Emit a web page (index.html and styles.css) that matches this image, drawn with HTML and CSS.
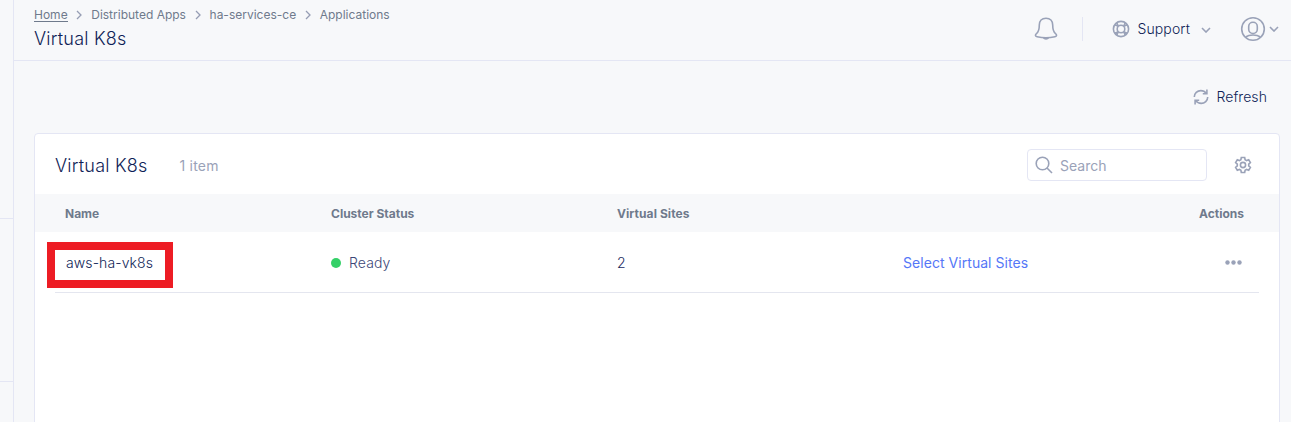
FILE: index.html
```html
<!DOCTYPE html>
<html lang="en">
<head>
<meta charset="utf-8">
<title>Virtual K8s</title>
<link rel="stylesheet" href="styles.css">
</head>
<body>
<div class="app">
  <aside class="rail"><div class="rail-a"></div><div class="rail-b"></div></aside>
  <div class="content">
    <header class="header">
      <div class="heading">
        <nav class="crumbs">
          <a class="home">Home</a>
          <svg class="sep" viewBox="0 0 6 10"><path d="M1 1l4 4-4 4"/></svg>
          <a class="c-apps">Distributed Apps</a>
          <svg class="sep" viewBox="0 0 6 10"><path d="M1 1l4 4-4 4"/></svg>
          <a class="c-ns">ha-services-ce</a>
          <svg class="sep" viewBox="0 0 6 10"><path d="M1 1l4 4-4 4"/></svg>
          <a class="c-last">Applications</a>
        </nav>
        <h1 class="title">Virtual K8s</h1>
      </div>
      <div class="tools">
        <svg class="icon bell" viewBox="0 0 24 24"><path d="M12 1.200c-4.200 0-6.700 2.800-6.700 6.800 0 4.500-.5 6.500-2.600 8.300-1.900 1.500-1.600 3.100.4 3.500 6 1.300 11.800 1.300 17.800 0 2-.4 2.300-2 .4-3.500-2.100-1.800-2.600-3.800-2.600-8.300 0-4-2.500-6.800-6.700-6.800z"/><path class="fill" d="M9 21h6c-.6 2.300-5.400 2.300-6 0z"/></svg>
        <span class="divider"></span>
        <svg class="icon ring" viewBox="0 0 18 18"><circle cx="9" cy="9" r="7.600"/><circle cx="9" cy="9" r="3.800"/><path d="M6.300 6.300L4.800 2.700M6.300 6.300L2.700 4.800M11.700 6.300l1.500-3.600M11.700 6.300l3.600-1.500M6.300 11.700l-1.500 3.600M6.300 11.700l-3.600 1.500M11.700 11.700l1.500 3.600M11.700 11.700l3.600 1.500"/></svg>
        <span class="support">Support</span>
        <svg class="icon chev chev-a" viewBox="0 0 10 6"><path d="M1 1l4 4 4-4"/></svg>
        <svg class="icon user" viewBox="0 0 26 26"><circle cx="13" cy="13" r="11.300"/><rect x="8.700" y="6.300" width="8.600" height="11.200" rx="4.200"/><path d="M5.500 21c4-2.600 11-2.600 15 0"/></svg>
        <svg class="icon chev chev-b" viewBox="0 0 10 6"><path d="M1 1l4 4 4-4"/></svg>
      </div>
    </header>
    <div class="actions">
      <svg class="icon refresh" viewBox="0 0 16 16"><path d="M1.300 8c0-3.700 3-6.400 6.500-6.400 2.200 0 4.200 1 5.400 2.800M13.900 .6v4.200H9.800M14.700 8c0 3.700-3 6.400-6.500 6.400-2.200 0-4.200-1-5.400-2.800M2.100 15.400v-4.200h4.100"/></svg>
      <span class="refresh-text">Refresh</span>
    </div>
    <main class="card">
      <div class="card-head">
        <h2 class="card-title">Virtual K8s</h2>
        <span class="count">1 item</span>
        <div class="search">
          <svg class="icon glass" viewBox="0 0 18 18"><circle cx="7.500" cy="7.500" r="6.300"/><path d="M12 12l5 5"/></svg>
          <span class="placeholder">Search</span>
        </div>
        <svg class="icon gear" viewBox="0 0 18 18"><path d="M7.300 1.500h3.400l.4 2.200 1.500.9 2.100-.8 1.700 2.900-1.700 1.500v1.600l1.700 1.500-1.700 2.900-2.100-.8-1.500.9-.4 2.200H7.300l-.4-2.200-1.500-.9-2.100.8-1.700-2.900 1.700-1.500V8.200L1.600 6.700l1.700-2.900 2.100.8 1.500-.9z"/><circle cx="9" cy="9" r="2.600"/></svg>
      </div>
      <div class="row row-head">
        <span class="th-name">Name</span><span class="th-status">Cluster Status</span><span class="th-sites">Virtual Sites</span><span></span><span class="th-actions">Actions</span>
      </div>
      <div class="row row-item">
        <span class="name">aws-ha-vk8s<i class="highlight"></i></span>
        <span class="status"><i class="dot"></i><b class="ready">Ready</b></span>
        <span class="num">2</span>
        <a class="link">Select Virtual Sites</a>
        <svg class="more" viewBox="0 0 17 5"><circle cx="2.500" cy="2.500" r="2.200"/><circle cx="8.500" cy="2.500" r="2.200"/><circle cx="14.500" cy="2.500" r="2.200"/></svg>
      </div>
    </main>
  </div>
</div>
</body>
</html>
```
FILE: styles.css
```css
* { box-sizing: border-box; }
body { margin: 0; font-family: Inter, "Liberation Sans", sans-serif; color: #0f1e57; background: #f7f8fa; }
h1, h2 { margin: 0; font-weight: 400; }
.app { display: flex; height: 422px; overflow: hidden; }
.rail { width: 14px; flex: none; border-right: 1px solid #e4e6f4; }
.rail-a { height: 219px; border-bottom: 1px solid #e4e6f4; }
.rail-b { height: 163px; border-bottom: 1px solid #e4e6f4; }
.content { flex: 1; display: flex; flex-direction: column; }
.header { height: 61px; flex: none; display: flex; justify-content: space-between; border-bottom: 1px solid #e4e6f4; padding-left: 20px; }
.crumbs { display: flex; align-items: center; height: 16px; margin-top: 7px; font-size: 12px; line-height: 16px; color: #6f7a8c; white-space: nowrap; }
.home { height: 14px; line-height: 14px; border-bottom: 1px solid #6f7a8c; }
.sep { width: 6px; height: 10px; margin: 0 8.800px; fill: none; stroke: #969db4; stroke-width: 1.3; }
.title { font-size: 18px; line-height: 24px; margin-top: 4px; font-weight: 300; letter-spacing: 0.22px; }
.tools { display: flex; align-items: center; height: 57px; padding-right: 12px; }
.icon { fill: none; stroke: #9aa2b8; stroke-width: 1.6; flex: none; }
.icon .fill { fill: #9aa2b8; stroke: none; }
.bell { width: 24px; height: 24px; margin-right: 24px; }
.divider { width: 1px; height: 24px; background: #e4e6f4; margin-right: 29px; }
.ring { width: 18px; height: 18px; margin-right: 7px; }
.support { font-size: 14px; line-height: 20px; font-weight: 350; letter-spacing: 0.12px; }
.chev { width: 10px; height: 6px; }
.chev-a { margin: 3px 29px 0 11px; }
.user { width: 26px; height: 26px; }
.chev-b { margin-left: 3px; }
.actions { height: 72px; flex: none; display: flex; justify-content: flex-end; align-items: center; padding: 0 24px 1px 0; gap: 7px; font-size: 14px; font-weight: 350; letter-spacing: 0.08px; }
.refresh { width: 16px; height: 16px; }
.card { flex: none; width: 1246px; height: 300px; margin-left: 20px; background: #fff; border: 1px solid #e4e6f4; border-radius: 4px; }
.card-head { height: 60px; display: flex; align-items: center; padding: 2px 27px 0 20px; }
.card-title { font-size: 18px; line-height: 24px; padding-top: 2px; font-weight: 300; letter-spacing: 0.22px; }
.count { margin-left: 32px; font-size: 14px; color: #9aa2b8; letter-spacing: 0.2px; }
.search { width: 180px; height: 32px; margin-left: auto; display: flex; align-items: center; gap: 7px; padding-left: 7px; border: 1px solid #e4e6f4; border-radius: 4px; font-size: 14px; color: #9aa2b8; }
.glass { width: 18px; height: 18px; }
.gear { width: 18px; height: 18px; margin-left: 27px; }
.row { display: grid; grid-template-columns: 266px 286px 286px 1fr auto; align-items: center; }
.row-head { height: 38px; padding: 0 35px 0 30px; background: #f7f8fa; font-size: 12px; font-weight: 700; color: #6f7a8c; }
.th-sites { letter-spacing: 0.08px; }
.row-item { height: 61px; margin: 0 20px; padding: 0 17.500px 0 10px; border-bottom: 1px solid #e4e6ef; font-size: 14px; }
.name { position: relative; padding-left: 1px; font-weight: 350; letter-spacing: 0.1px; }
.highlight { position: absolute; left: -18px; top: -12px; width: 126px; height: 46px; border: 8px solid #ed1c24; }
.status { display: flex; align-items: center; gap: 8px; color: #3c4777; }
.dot { width: 10px; height: 10px; margin-top: 1px; border-radius: 50%; background: #35d068; }
.ready { font-weight: 350; letter-spacing: 0.1px; }
.num { color: #1c2a60; font-weight: 350; }
.link { color: #5577f7; letter-spacing: 0.05px; }
.more { width: 17px; height: 5px; margin-top: 1px; fill: #9aa2b8; }
```
